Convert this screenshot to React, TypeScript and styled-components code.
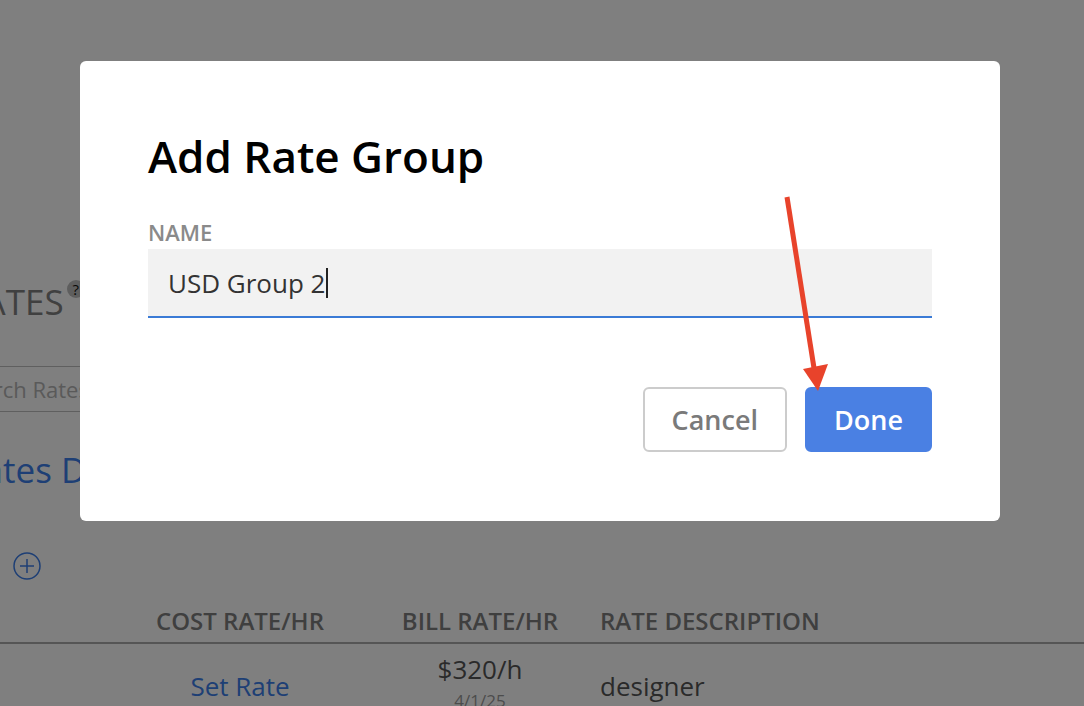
import React from 'react';
import styled, { createGlobalStyle } from 'styled-components';

const GlobalStyle = createGlobalStyle`
    html, body {
        margin: 0;
        padding: 0;
        background: #ffffff;
        overflow: hidden;
        font-family: 'Open Sans', 'Noto Sans', sans-serif;
    }
`

const Page = styled.div`
    width: 1084px;
    height: 706px;
    padding-top: 278px;
    box-sizing: border-box;
    overflow: hidden;
`

// page is scrolled a little to the right, so the left edge of the content is cut off
const Section = styled.div`
    margin-left: -38px;
    display: flex;
    flex-direction: column;
    align-items: flex-start;
`

const PageTitle = styled.h2`
    margin: 0;
    font-size: 35px;
    line-height: 48px;
    font-weight: 400;
    color: #808080;
    display: flex;
    align-items: flex-start;
`

const HelpBadge = styled.span`
    width: 18px;
    height: 18px;
    border-radius: 50%;
    background: #bdbdbd;
    color: #111;
    font-size: 15px;
    line-height: 18px;
    text-align: center;
    margin: 2px 0 0 3px;
`

const SearchBox = styled.div`
    margin-top: 40px;
    margin-left: -16px;
    width: 320px;
    height: 46px;
    box-sizing: border-box;
    border: 1px solid #bfbfbf;
    padding: 0 10px;
    display: flex;
    align-items: center;
    font-size: 22px;
    color: #b4b4b4;
`

const GroupTitle = styled.h3`
    margin: 34px 0 0;
    font-size: 35px;
    line-height: 48px;
    font-weight: 400;
    color: #3c7eea;
`

const AddButton = styled.div`
    margin: 58px 0 0 13px;
    width: 28px;
    height: 28px;
    color: #3c7eea;
`

const Table = styled.div`
    margin-top: 20px;
`

const Row = styled.div<{ $head?: boolean }>`
    display: grid;
    grid-template-columns: 120px 240px 240px 1fr;
    align-items: start;
    border-bottom: ${p => (p.$head ? '2px solid #aaaaaa' : 'none')};
    padding: ${p => (p.$head ? '6px 0 6px' : '8px 0 0')};
`

const HeadCell = styled.div<{ $left?: boolean }>`
    font-size: 24px;
    line-height: 30px;
    font-weight: 600;
    color: #7e7e7e;
    text-align: ${p => (p.$left ? 'left' : 'center')};
`

const Cell = styled.div<{ $left?: boolean; $link?: boolean }>`
    font-size: 26px;
    line-height: 34px;
    color: ${p => (p.$link ? '#3c7eea' : '#555555')};
    text-align: ${p => (p.$left ? 'left' : 'center')};
    padding-top: ${p => (p.$link || p.$left ? '17px' : '0')};
`

const SubText = styled.div`
    margin-top: 5px;
    font-size: 17px;
    line-height: 20px;
    color: #999;
`

const Overlay = styled.div`
    position: fixed;
    inset: 0;
    background: rgba(0, 0, 0, 0.5);
    display: flex;
    align-items: flex-start;
    padding: 61px 0 0 80px;
`

const Modal = styled.div`
    width: 920px;
    height: 460px;
    box-sizing: border-box;
    background: #ffffff;
    border-radius: 6px;
    padding: 65px 68px 69px;
    display: flex;
    flex-direction: column;
`

const ModalTitle = styled.h1`
    margin: 0;
    font-size: 44px;
    line-height: 60px;
    font-weight: 600;
    color: #000;
`

const FieldLabel = styled.label`
    margin-top: 31px;
    font-size: 22px;
    line-height: 30px;
    font-weight: 600;
    color: #8a8a8a;
`

const TextField = styled.div`
    margin-top: 2px;
    height: 69px;
    box-sizing: border-box;
    background: #f2f2f2;
    border-bottom: 2px solid #3b7bd6;
    padding: 0 20px;
    display: flex;
    align-items: center;
    font-size: 26px;
    color: #333;
`

const Caret = styled.span`
    display: inline-block;
    width: 2px;
    height: 30px;
    background: #222;
    margin-left: 1px;
`

const Actions = styled.div`
    margin-top: 69px;
    display: flex;
    justify-content: flex-end;
    gap: 18px;
`

const Button = styled.button<{ $primary?: boolean }>`
    height: 65px;
    padding: 0 27px;
    box-sizing: border-box;
    border-radius: 6px;
    font-family: 'Open Sans', sans-serif;
    font-size: 27px;
    font-weight: 600;
    border: 2px solid ${p => (p.$primary ? '#4a80e3' : '#cccccc')};
    background: ${p => (p.$primary ? '#4a80e3' : '#ffffff')};
    color: ${p => (p.$primary ? '#ffffff' : '#7a7a7a')};
    cursor: pointer;
`

const Annotation = styled.svg`
    position: fixed;
    inset: 0;
    pointer-events: none;
`

export default function App() {
    return (
        <React.Fragment>
            <GlobalStyle />
            <Page>
                <Section>
                    <PageTitle>
                        RATES<HelpBadge>?</HelpBadge>
                    </PageTitle>
                    <SearchBox>Search Rates</SearchBox>
                    <GroupTitle>Rates Default</GroupTitle>
                </Section>
                <AddButton>
                    <svg width="28" height="28" viewBox="0 0 28 28" fill="none" stroke="currentColor" strokeWidth="1.5">
                        <circle cx="14" cy="14" r="13" />
                        <path d="M14 7v14M7 14h14" />
                    </svg>
                </AddButton>
                <Table>
                    <Row $head>
                        <div />
                        <HeadCell>COST RATE/HR</HeadCell>
                        <HeadCell>BILL RATE/HR</HeadCell>
                        <HeadCell $left>RATE DESCRIPTION</HeadCell>
                    </Row>
                    <Row>
                        <div />
                        <Cell $link>Set Rate</Cell>
                        <Cell>
                            $320/h
                            <SubText>4/1/25</SubText>
                        </Cell>
                        <Cell $left>designer</Cell>
                    </Row>
                </Table>
            </Page>
            <Overlay>
                <Modal>
                    <ModalTitle>Add Rate Group</ModalTitle>
                    <FieldLabel>NAME</FieldLabel>
                    <TextField>
                        USD Group 2<Caret />
                    </TextField>
                    <Actions>
                        <Button>Cancel</Button>
                        <Button $primary>Done</Button>
                    </Actions>
                </Modal>
            </Overlay>
            <Annotation width="1084" height="706" viewBox="0 0 1084 706">
                <line x1="787" y1="197" x2="814" y2="368" stroke="#e8432b" strokeWidth="5" />
                <polygon points="803,369 828,364 818,391" fill="#e8432b" />
            </Annotation>
        </React.Fragment>
    );
}
